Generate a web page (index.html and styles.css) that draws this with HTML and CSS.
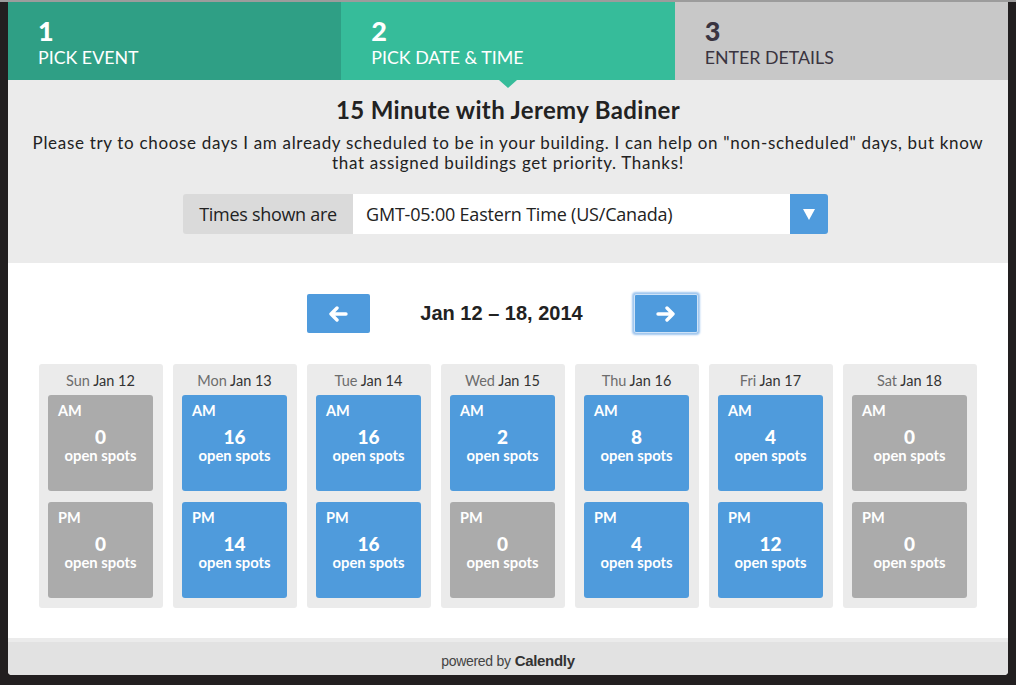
FILE: index.html
```html
<!DOCTYPE html>
<html>
<head>
<meta charset="utf-8">
<link rel="stylesheet" href="styles.css">
</head>
<body>
<div class="frame">
  <div class="steps">
    <div class="step done"><div class="num">1</div><div class="label">PICK EVENT</div></div>
    <div class="step active"><div class="num">2</div><div class="label">PICK DATE &amp; TIME</div></div>
    <div class="step todo"><div class="num">3</div><div class="label">ENTER DETAILS</div></div>
  </div>
  <div class="header">
    <h1 class="title">15 Minute with Jeremy Badiner</h1>
    <p class="desc">Please try to choose days I am already scheduled to be in your building. I can help on "non-scheduled" days, but know that assigned buildings get priority. Thanks!</p>
    <div class="tz">
      <div class="tz-label">Times shown are</div>
      <div class="tz-select">GMT-05:00 Eastern Time (US/Canada)</div>
      <div class="tz-btn"><svg width="12" height="11" viewBox="0 0 12 11"><path d="M0 0H12L6 11Z" fill="#fff"/></svg></div>
    </div>
  </div>
  <div class="main">
    <div class="nav">
      <div class="navbtn prev"><svg width="20" height="16" viewBox="0 0 20 16"><path d="M18 8H3M9 2L3 8L9 14" fill="none" stroke="#fff" stroke-width="3.4" stroke-linecap="round" stroke-linejoin="round"/></svg></div>
      <div class="range">Jan 12 – 18, 2014</div>
      <div class="navbtn next"><svg width="20" height="16" viewBox="0 0 20 16"><path d="M2 8H17M11 2L17 8L11 14" fill="none" stroke="#fff" stroke-width="3.4" stroke-linecap="round" stroke-linejoin="round"/></svg></div>
    </div>
    <div class="days">
      <div class="day"><div class="dh"><span class="dw">Sun</span> Jan 12</div>
        <div class="slot off"><div class="ap">AM</div><div class="n">0</div><div class="os">open spots</div></div>
        <div class="slot off"><div class="ap">PM</div><div class="n">0</div><div class="os">open spots</div></div></div>
      <div class="day"><div class="dh"><span class="dw">Mon</span> Jan 13</div>
        <div class="slot on"><div class="ap">AM</div><div class="n">16</div><div class="os">open spots</div></div>
        <div class="slot on"><div class="ap">PM</div><div class="n">14</div><div class="os">open spots</div></div></div>
      <div class="day"><div class="dh"><span class="dw">Tue</span> Jan 14</div>
        <div class="slot on"><div class="ap">AM</div><div class="n">16</div><div class="os">open spots</div></div>
        <div class="slot on"><div class="ap">PM</div><div class="n">16</div><div class="os">open spots</div></div></div>
      <div class="day"><div class="dh"><span class="dw">Wed</span> Jan 15</div>
        <div class="slot on"><div class="ap">AM</div><div class="n">2</div><div class="os">open spots</div></div>
        <div class="slot off"><div class="ap">PM</div><div class="n">0</div><div class="os">open spots</div></div></div>
      <div class="day"><div class="dh"><span class="dw">Thu</span> Jan 16</div>
        <div class="slot on"><div class="ap">AM</div><div class="n">8</div><div class="os">open spots</div></div>
        <div class="slot on"><div class="ap">PM</div><div class="n">4</div><div class="os">open spots</div></div></div>
      <div class="day"><div class="dh"><span class="dw">Fri</span> Jan 17</div>
        <div class="slot on"><div class="ap">AM</div><div class="n">4</div><div class="os">open spots</div></div>
        <div class="slot on"><div class="ap">PM</div><div class="n">12</div><div class="os">open spots</div></div></div>
      <div class="day"><div class="dh"><span class="dw">Sat</span> Jan 18</div>
        <div class="slot off"><div class="ap">AM</div><div class="n">0</div><div class="os">open spots</div></div>
        <div class="slot off"><div class="ap">PM</div><div class="n">0</div><div class="os">open spots</div></div></div>
    </div>
  </div>
  <div class="footer">powered by <b>Calendly</b></div>
</div>
</body>
</html>
```

FILE: styles.css
```css
html, body { margin: 0; padding: 0; }
body {
  background: #221f20;
  border-top: 2px solid #9c9c9c;
  height: 683px;
  overflow: hidden;
  font-family: Lato, "Open Sans", sans-serif;
  color: #222;
}
.frame {
  margin-left: 8px;
  width: 1000px;
  background: #fff;
  border-radius: 0 0 4px 4px;
  overflow: hidden;
}
.steps { display: flex; height: 78px; }
.step {
  flex: 1;
  position: relative;
  padding: 14px 0 0 30px;
  box-sizing: border-box;
  color: #fff;
}
.step.done { background: #2f9f85; }
.step.active { background: #36bc9a; }
.step.todo { background: #c8c8c8; color: #3a3440; }
.step.active::after {
  content: "";
  position: absolute;
  left: 50%;
  bottom: -8px;
  margin-left: -9px;
  border-left: 9px solid transparent;
  border-right: 9px solid transparent;
  border-top: 8px solid #36bc9a;
}
.num { font-size: 27px; font-weight: 900; line-height: 30px; }
.label { font-size: 17.8px; line-height: 22px; margin-top: 0; letter-spacing: 0; }
.header {
  background: #ebebeb;
  padding: 16px 20px 29px;
  text-align: center;
}
.title { margin: 0; font-size: 24px; font-weight: 700; line-height: 28px; color: #222; letter-spacing: 0.35px; }
.desc { margin: 9px 0 0; font-size: 17px; line-height: 20px; color: #222; letter-spacing: 0.68px; }
.tz {
  margin: 21px 0 0 155px;
  width: 645px;
  height: 40px;
  display: flex;
  font-family: "Open Sans", sans-serif;
  font-size: 18px;
  color: #222;
}
.tz-label {
  width: 170px;
  background: #dadada;
  border-radius: 3px 0 0 3px;
  display: flex; align-items: center; justify-content: center;
  letter-spacing: -0.3px;
}
.tz-select {
  flex: 1;
  background: #fff;
  display: flex; align-items: center;
  padding-left: 13px;
  letter-spacing: -0.2px;
}
.tz-btn {
  width: 38px;
  background: #4f9bdd;
  border-radius: 0 3px 3px 0;
  display: flex; align-items: center; justify-content: center;
}
.main { padding: 31px 30px 30px 31px; }
.nav { display: flex; justify-content: center; align-items: center; height: 39px; margin-left: -13px; }
.navbtn {
  height: 39px;
  background: #4f9bdd;
  border-radius: 2px;
  display: flex; align-items: center; justify-content: center;
  box-sizing: border-box;
}
.prev { width: 63px; }
.next { width: 64px; border: 1px solid #cfe3f7; box-shadow: 0 0 2px 2px #9fc6ef; }
.range {
  width: 264px;
  text-align: center;
  font-family: "Liberation Sans", Arial, sans-serif;
  font-weight: 700;
  font-size: 20px;
  color: #222;
  letter-spacing: 0;
}
.days {
  margin-top: 31px;
  display: grid;
  grid-template-columns: repeat(6, 124px) 134px;
  column-gap: 10px;
}
.day {
  background: #ebebeb;
  border-radius: 3px;
  padding: 8px 10px 10px 9px;
}
.dh { text-align: center; font-size: 14.5px; line-height: 18px; color: #333; margin-bottom: 5px; }
.dw { color: #6d6d6d; }
.slot {
  height: 96px;
  box-sizing: border-box;
  border-radius: 3px;
  color: #fff;
  padding: 7px 10px 0;
  text-align: center;
}
.slot + .slot { margin-top: 11px; }
.slot.on { background: #4f9bdc; }
.slot.off { background: #ababab; }
.ap { text-align: left; font-size: 14.5px; font-weight: 700; line-height: 17px; }
.n { margin-top: 8px; font-size: 19px; font-weight: 900; line-height: 20px; }
.os { font-size: 14.8px; font-weight: 700; line-height: 16px; }
.footer {
  background: #e2e2e2;
  border-top: 4px solid #ebebeb;
  height: 37px;
  box-sizing: border-box;
  display: flex; align-items: center; justify-content: center;
  padding-top: 4px;
  font-family: "Liberation Sans", Arial, sans-serif;
  font-size: 14px;
  color: #444;
  letter-spacing: -0.3px;
}
.footer b { color: #333; margin-left: 4px; font-size: 15px; }
```
